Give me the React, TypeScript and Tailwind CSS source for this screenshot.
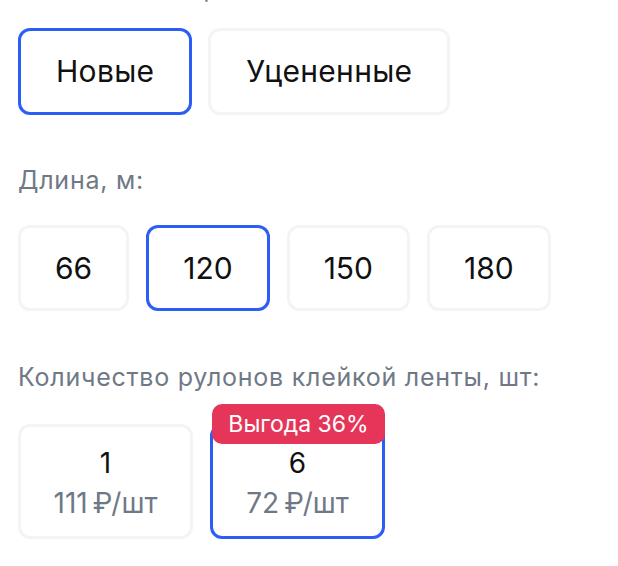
import React from 'react';

const conditions = ['Новые', 'Уцененные'];
const lengths = ['66', '120', '150', '180'];
const packs = [
  { count: '1', price: '111\u202F₽/шт' },
  { count: '6', price: '72\u202F₽/шт', badge: 'Выгода 36%' },
];

const boxBase = 'flex items-center justify-center rounded-[12px] border-[3px] bg-white text-[#111] text-[30px]';
const active = 'border-[#2c5ef6]';
const idle = 'border-[#f3f4f8]';
const label = 'text-[25px] leading-[32px] tracking-[0.03em] text-[#6f7986]';

export default function App() {
  const selectedCondition = 'Новые';
  const selectedLength = '120';
  const selectedPack = '6';

  return (
    <div className="w-[618px] h-[566px] overflow-hidden bg-white pl-[18px] font-['Inter','Noto_Sans',sans-serif]">
      {/* верхняя подпись, почти вся за краем */}
      <p className="mt-[-27px] text-[24px] leading-[32px] text-[#6f7986]">Состояние товара:</p>

      <div className="mt-[23px] flex gap-4">
        {conditions.map(c => (
          <button key={c} className={`${boxBase} h-[87px] px-[35px] tracking-[0.01em] ${c === selectedCondition ? active : idle}`}>
            {c}
          </button>
        ))}
      </div>

      <p className={`mt-[49px] ${label}`}>Длина, м:</p>
      <div className="mt-[29px] flex gap-[17px]">
        {lengths.map(l => (
          <button key={l} className={`${boxBase} h-[86px] px-[34px] ${l === selectedLength ? active : idle}`}>
            {l}
          </button>
        ))}
      </div>

      <p className={`mt-[50px] ${label}`}>Количество рулонов клейкой ленты, шт:</p>
      <div className="mt-[31px] flex gap-[17px]">
        {packs.map(p => (
          <div
            key={p.count}
            className={`relative flex h-[115px] w-[175px] flex-col items-center justify-center rounded-[12px] border-[3px] bg-white pt-[2px] ${p.count === selectedPack ? active : idle}`}
          >
            {p.badge && (
              <span className="absolute -top-[23px] left-[-1px] right-[-3px] flex h-[40px] items-center justify-center rounded-[10px] bg-[#e5365a] text-[23px] text-white">
                {p.badge}
              </span>
            )}
            <span className="text-[28px] leading-[40px] text-[#111]">{p.count}</span>
            <span className="text-[28px] leading-[40px] text-[#6f7986]">{p.price}</span>
          </div>
        ))}
      </div>
    </div>
  );
}
